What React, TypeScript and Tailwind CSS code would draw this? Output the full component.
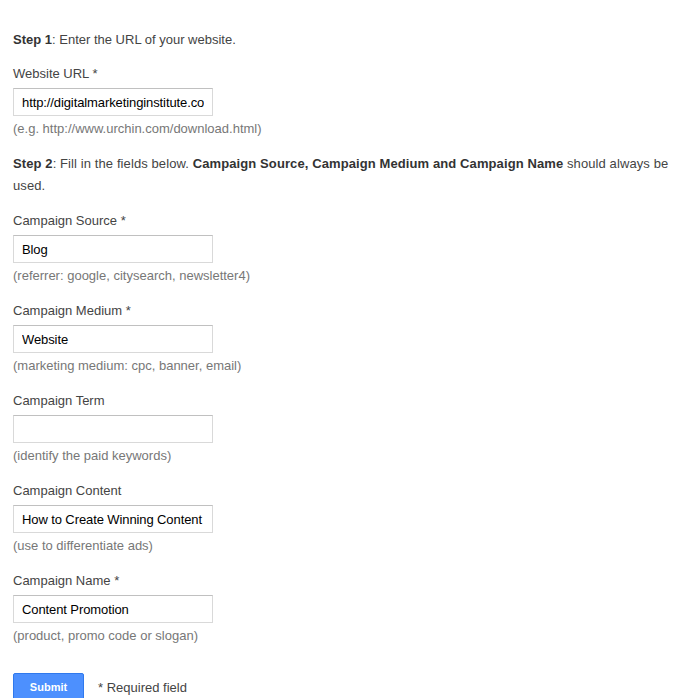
import React from "react";

type Field = {
  label: string;
  required?: boolean;
  value: string;
  hint: string;
};

const fields: Field[] = [
  { label: "Campaign Source", required: true, value: "Blog", hint: "(referrer: google, citysearch, newsletter4)" },
  { label: "Campaign Medium", required: true, value: "Website", hint: "(marketing medium: cpc, banner, email)" },
  { label: "Campaign Term", value: "", hint: "(identify the paid keywords)" },
  { label: "Campaign Content", value: "How to Create Winning Content", hint: "(use to differentiate ads)" },
  { label: "Campaign Name", required: true, value: "Content Promotion", hint: "(product, promo code or slogan)" },
];

function FormField({ label, required, value, hint }: Field) {
  return (
    <div>
      <label className="block leading-[18px]">
        {label}
        {required && " *"}
      </label>
      <input
        type="text"
        defaultValue={value}
        className="mt-[5px] block h-[28px] w-[200px] border border-[#d9d9d9] border-t-[#c0c0c0] bg-white px-[8px] text-[13px] tracking-[-0.1px] text-black outline-none"
        style={{ fontFamily: "inherit" }}
      />
      <div className="mt-[4px] leading-[18px] text-[#777]">{hint}</div>
    </div>
  );
}

export default function App() {
  return (
    <div
      className="min-h-screen bg-white pl-[13px] pr-[13px] pt-[29px] text-[13px] text-[#444]"
      style={{ fontFamily: '"Liberation Sans", Arial, sans-serif' }}
    >
      <p className="leading-[22px]">
        <b className="text-[#333]">Step 1</b>: Enter the URL of your website.
      </p>

      <div className="mt-[14px]">
        <label className="block leading-[18px]">Website URL *</label>
        <input
          type="text"
          defaultValue="http://digitalmarketinginstitute.com/blog"
          className="mt-[5px] block h-[28px] w-[200px] border border-[#d9d9d9] border-t-[#c0c0c0] bg-white px-[8px] text-[13px] tracking-[-0.1px] text-black outline-none"
          style={{ fontFamily: "inherit" }}
        />
        <div className="mt-[4px] leading-[18px] text-[#777]">(e.g. http://www.urchin.com/download.html)</div>
      </div>

      <p className="mt-[15px] leading-[22px] tracking-[0.1px]">
        <b className="text-[#333]">Step 2</b>: Fill in the fields below.{" "}
        <b className="text-[#333]">Campaign Source, Campaign Medium and Campaign Name</b> should always be used.
      </p>

      <div className="mt-[15px] flex flex-col gap-[17px]">
        {fields.map((f) => (
          <FormField key={f.label} {...f} />
        ))}
      </div>

      <div className="mt-[28px] flex items-center gap-[14px]">
        <button className="h-[29px] w-[71px] rounded-[2px] border border-[#3079ed] bg-[#4d90fe] text-[11px] font-bold text-white">
          Submit
        </button>
        <span className="text-[#444]">* Required field</span>
      </div>
    </div>
  );
}
